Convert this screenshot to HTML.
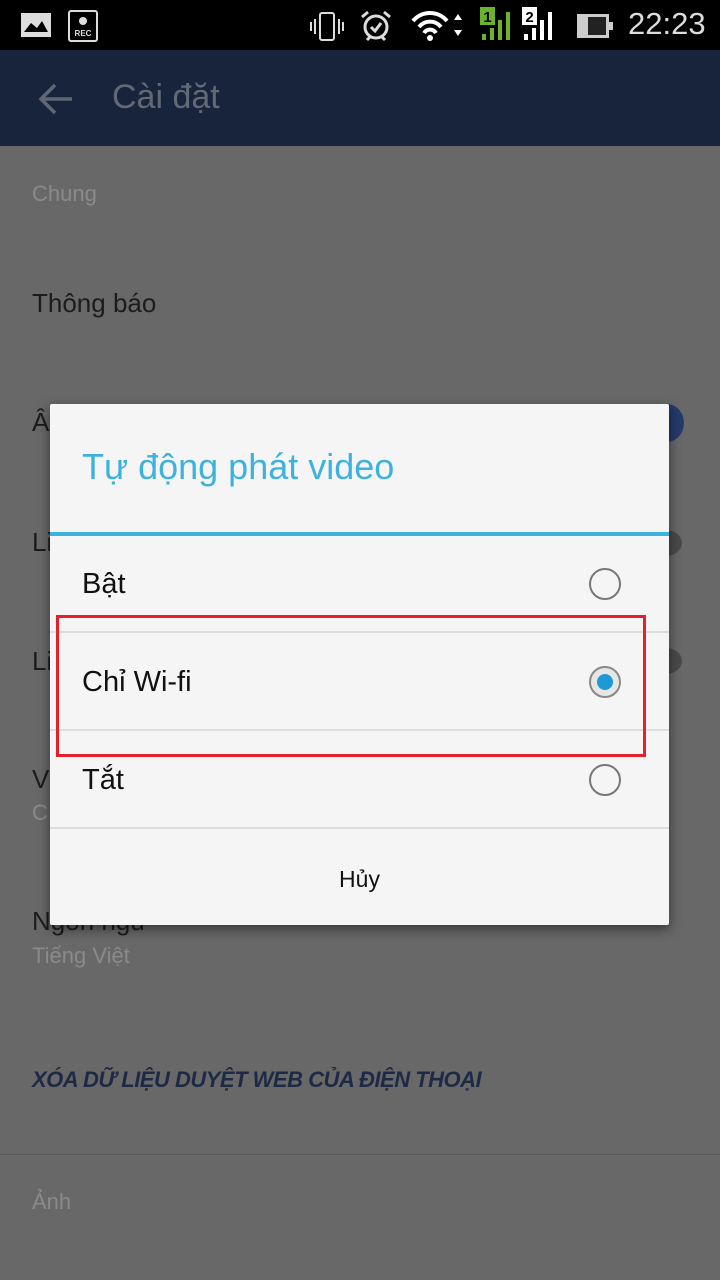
<!DOCTYPE html>
<html><head><meta charset="utf-8"><style>
body{margin:0;width:720px;height:1280px;position:relative;overflow:hidden;background:#686868;font-family:"Liberation Sans",sans-serif}
.a{position:absolute;white-space:nowrap}
.sb{top:0;left:0;width:720px;height:50px;background:#000}
.hd{top:50px;left:0;width:720px;height:96px;background:#18243b}
.dlg{left:50px;top:404px;width:619px;height:521px;background:#f5f5f5;box-shadow:0 4px 12px rgba(0,0,0,.5);border-radius:2px}
.line{position:absolute;left:0;width:619px;height:2px;background:#dcdcdc}
.rad{position:absolute;left:539px;width:32px;height:32px;border:2px solid #777;border-radius:50%;box-sizing:border-box}
.opt{position:absolute;left:32px;font-size:29px;color:#111}
</style></head><body>
<div class="a sb"></div>
<svg class="a" style="left:20px;top:12px" width="34" height="26"><rect x="1" y="1" width="30" height="24" fill="#ddd"/><path d="M4 20 L11 11 L17 16 L22 9 L28 20Z" fill="#000"/></svg>
<svg class="a" style="left:68px;top:10px" width="32" height="32"><rect x="1" y="1" width="28" height="30" rx="2" fill="none" stroke="#ddd" stroke-width="2"/><circle cx="15" cy="11" r="4" fill="#ddd"/><text x="15" y="26" font-size="8" fill="#ddd" text-anchor="middle" font-family="Liberation Sans" font-weight="bold">REC</text></svg>
<svg class="a" style="left:308px;top:10px" width="40" height="34"><rect x="12" y="3" width="14" height="27" rx="2" fill="none" stroke="#ddd" stroke-width="2"/><path d="M7 9v15M3 12v9M31 9v15M35 12v9" stroke="#ddd" stroke-width="2"/></svg>
<svg class="a" style="left:358px;top:8px" width="36" height="36"><circle cx="18" cy="19" r="11" fill="none" stroke="#ddd" stroke-width="3"/><path d="M13 19l4 4 6-8" fill="none" stroke="#ddd" stroke-width="3"/><path d="M4 9l6-5M32 9l-6-5M9 32l3-3M27 32l-3-3" stroke="#ddd" stroke-width="3"/></svg>
<svg class="a" style="left:410px;top:10px" width="56" height="32"><path d="M3 11 A22 22 0 0 1 37 11" fill="none" stroke="#fff" stroke-width="4"/><path d="M9 17 A14 14 0 0 1 31 17" fill="none" stroke="#fff" stroke-width="4"/><path d="M14 23 A7 7 0 0 1 26 23" fill="none" stroke="#fff" stroke-width="4"/><circle cx="20" cy="28" r="3" fill="#fff"/><path d="M44 10l4-6 4 6zM44 20l4 6 4-6z" fill="#fff"/></svg>
<svg class="a" style="left:480px;top:6px" width="120" height="36"><rect x="0" y="1" width="15" height="18" fill="#6ab42a"/><text x="7.5" y="16" font-size="15" font-weight="bold" text-anchor="middle" fill="#000" font-family="Liberation Sans">1</text><rect x="2" y="28" width="4" height="6" fill="#6ab42a"/><rect x="10" y="22" width="4" height="12" fill="#6ab42a"/><rect x="18" y="14" width="4" height="20" fill="#6ab42a"/><rect x="26" y="6" width="4" height="28" fill="#6ab42a"/><rect x="42" y="1" width="15" height="18" fill="#fff"/><text x="49.5" y="16" font-size="15" font-weight="bold" text-anchor="middle" fill="#000" font-family="Liberation Sans">2</text><rect x="44" y="28" width="4" height="6" fill="#fff"/><rect x="52" y="22" width="4" height="12" fill="#fff"/><rect x="60" y="14" width="4" height="20" fill="#fff"/><rect x="68" y="6" width="4" height="28" fill="#fff"/></svg>
<svg class="a" style="left:576px;top:12px" width="40" height="30"><rect x="1" y="2" width="32" height="24" fill="#ccc"/><rect x="12" y="5" width="18" height="18" fill="#222"/><rect x="33" y="10" width="4" height="8" fill="#ccc"/></svg>
<div class="a" style="left:628px;top:6px;font-size:31px;color:#ddd">22:23</div>
<div class="a hd"></div>
<svg class="a" style="left:38px;top:82px" width="36" height="34"><path d="M34 17H4M17 3L3 17l14 14" fill="none" stroke="#5f6674" stroke-width="3.5"/></svg>
<div class="a" style="left:112px;top:78px;font-size:34px;color:#626875">Cài đặt</div>
<div class="a" style="left:32px;top:181px;font-size:22px;color:#8a8a8a">Chung</div>
<div class="a" style="left:32px;top:288px;font-size:26px;color:#1c1c1c">Thông báo</div>
<div class="a" style="left:32px;top:407px;font-size:26px;color:#1c1c1c">Â</div>
<div class="a" style="left:650px;top:404px;width:34px;height:38px;border-radius:50%;background:#243a6a"></div>
<div class="a" style="left:32px;top:527px;font-size:26px;color:#1c1c1c">Li</div>
<div class="a" style="left:650px;top:530px;width:32px;height:26px;border-radius:50%;background:#4a4a4a"></div>
<div class="a" style="left:32px;top:646px;font-size:26px;color:#1c1c1c">Li</div>
<div class="a" style="left:650px;top:648px;width:32px;height:26px;border-radius:50%;background:#4a4a4a"></div>
<div class="a" style="left:32px;top:764px;font-size:26px;color:#1c1c1c">V</div>
<div class="a" style="left:32px;top:800px;font-size:22px;color:#8a8a8a">C</div>
<div class="a" style="left:32px;top:906px;font-size:26px;color:#1c1c1c">Ngôn ngữ</div>
<div class="a" style="left:32px;top:943px;font-size:22px;color:#8a8a8a">Tiếng Việt</div>
<div class="a" style="left:32px;top:1067px;font-size:22px;color:#1e2a45;font-weight:bold;font-style:italic;letter-spacing:-0.5px">XÓA DỮ LIỆU DUYỆT WEB CỦA ĐIỆN THOẠI</div>
<div class="a" style="left:0;top:1154px;width:720px;height:1px;background:#5a5a5a"></div>
<div class="a" style="left:32px;top:1189px;font-size:22px;color:#8a8a8a">Ảnh</div>
<div class="a dlg">
<div class="a" style="left:32px;top:42px;font-size:36px;color:#3eb2df">Tự động phát video</div>
<div style="position:absolute;left:0;top:128px;width:619px;height:4px;background:#3eb2df"></div>
<div class="opt" style="top:164px">Bật</div><div class="rad" style="top:164px"></div>
<div class="line" style="top:227px"></div>
<div class="opt" style="top:262px">Chỉ Wi-fi</div>
<div class="rad" style="top:262px;border-color:#888;background:#e6e6e6"><div style="position:absolute;left:6px;top:6px;width:16px;height:16px;border-radius:50%;background:#1d9ad6"></div></div>
<div class="line" style="top:325px"></div>
<div class="opt" style="top:360px">Tắt</div><div class="rad" style="top:360px"></div>
<div class="line" style="top:423px"></div>
<div class="a" style="left:0;width:619px;text-align:center;top:462px;font-size:23px;color:#111">Hủy</div>
</div>
<div class="a" style="left:56px;top:615px;width:590px;height:142px;border:3px solid #e3202b;box-sizing:border-box"></div>
</body></html>
